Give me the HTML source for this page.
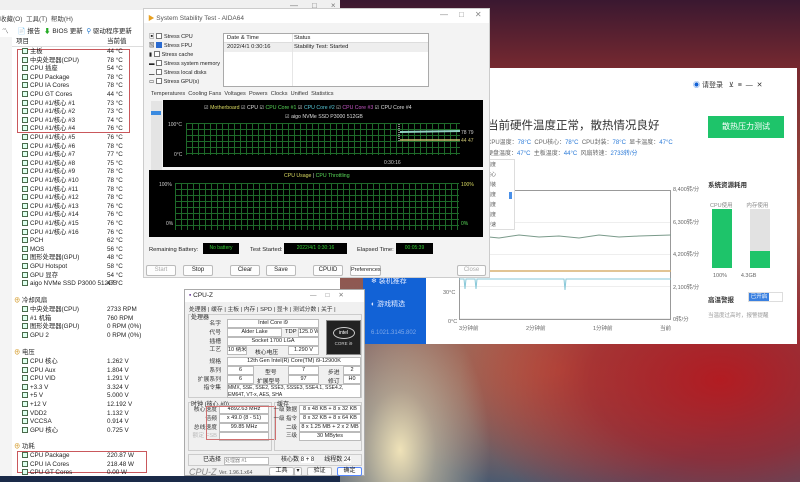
<!DOCTYPE html>
<html><head><meta charset="utf-8"><style>
*{margin:0;padding:0;box-sizing:border-box}
body{width:800px;height:482px;overflow:hidden;position:relative;font-family:"Liberation Sans","Noto Sans CJK SC",sans-serif;font-size:6.5px;color:#222;
background:radial-gradient(ellipse 90px 150px at 400px 450px,#efe2b8 0%,rgba(210,200,170,0.6) 40%,transparent 100%),radial-gradient(ellipse 260px 160px at 720px 380px,#b21c22 0%,rgba(160,30,40,0.7) 50%,transparent 100%),radial-gradient(ellipse 200px 120px at 560px 370px,#c46a4a 0%,transparent 100%),linear-gradient(180deg,#3a1830 0%,#7a2a30 15%,#a05040 45%,#806060 70%,#4a5a70 100%)}
.a{position:absolute;white-space:nowrap}
.win{position:absolute;background:#fff}
.row{position:absolute;left:22px;height:8px;white-space:nowrap;font-size:6.3px;line-height:8px}
.row i{display:inline-block;width:6px;height:6px;border:1.2px solid #4a6a4a;background:#dfe;vertical-align:-1px;margin-right:2px}
.row b{font-weight:normal;position:absolute;left:85px}
.cb{display:inline-block;width:6px;height:6px;border:1px solid #777;background:#fff;vertical-align:-1px;margin-right:2px}
.btn{position:absolute;height:11px;border:1px solid #bbb;background:#fdfdfd;border-radius:2px;font-size:6px;text-align:center;line-height:9px;white-space:nowrap}
.grid{background-color:#000;background-image:linear-gradient(#1e6a2a 1px,transparent 1px),linear-gradient(90deg,#1e6a2a 1px,transparent 1px);background-size:6px 6px}
.lb{position:absolute;font-size:5.8px;color:#333;text-align:right;white-space:nowrap}
.fld{position:absolute;border:1px solid #bbb;background:#fff;font-size:5.5px;text-align:center;line-height:7px;height:9px;white-space:nowrap;overflow:hidden}
</style></head><body>

<!-- AIDA main window -->
<div class="win" style="left:0;top:0;width:340px;height:476px;background:#fff">
<div class="a" style="left:0;top:0;width:340px;height:10px;background:#f0f0f0"></div>
<div class="a" style="left:290px;top:1px;font-size:8px;color:#777;letter-spacing:14px">—□×</div>
<div class="a" style="left:0;top:13px;font-size:6.5px;color:#444">收藏(O) &nbsp;工具(T) &nbsp;帮助(H)</div>
<div class="a" style="left:2px;top:25px;font-size:6.5px;color:#222">〽 &nbsp;&nbsp;&nbsp;&nbsp;📄 报告 &nbsp;<span style="color:#2a2">⬇</span> BIOS 更新 &nbsp;<span style="color:#27c">⚲</span> 驱动程序更新</div>
<div class="a" style="left:0;top:37px;width:145px;height:10px;border-bottom:1px solid #ddd;font-size:6.5px;line-height:10px"><span style="margin-left:16px">项目</span><span style="position:absolute;left:107px">当前值</span></div>
<div class="a" style="left:0;top:37px;width:12px;height:445px;background:#f4f4f4"></div>
<div class="a" style="left:17px;top:49px;width:113px;height:84px;border:1px solid #c9585c"></div>
<div class="a" style="left:17px;top:451px;width:130px;height:22px;border:1px solid #c9585c"></div>
<div id="rows"></div>
<div class="a" style="left:0;top:476px;width:340px;height:6px;background:#1a2a48"></div>
</div>

<!-- Ludashi window -->
<div class="win" style="left:363px;top:68px;width:434px;height:276px">
<div class="a" style="left:0;top:0;width:63px;height:276px;background:#1262d6"></div>
<div class="a" style="left:8px;top:208px;color:#dfe8ff;font-size:7px">❄ 装机推荐</div>
<div class="a" style="left:8px;top:231px;color:#dfe8ff;font-size:7px">◐ 游戏精选</div>
<div class="a" style="left:8px;top:262px;color:#7fa8e8;font-size:6px">6.1021.3145.802</div>
<div class="a" style="left:330px;top:12px;font-size:7px;color:#333"><span style="color:#1262d6">◉</span> 请登录 &nbsp;&nbsp;⊻ &nbsp;≡ &nbsp;— &nbsp;✕</div>
<div class="a" style="left:124px;top:49px;font-size:11.5px;color:#333">当前硬件温度正常，散热情况良好</div>
<div class="a" style="left:124px;top:69px;font-size:6px;color:#666">CPU温度：<span style="color:#2a7ad8">78°C</span> &nbsp;CPU核心：<span style="color:#2a7ad8">78°C</span> &nbsp;CPU封装：<span style="color:#2a7ad8">78°C</span> &nbsp;显卡温度：<span style="color:#2a7ad8">47°C</span></div>
<div class="a" style="left:124px;top:80px;font-size:6px;color:#666">硬盘温度：<span style="color:#2a7ad8">47°C</span> &nbsp;主板温度：<span style="color:#2a7ad8">44°C</span> &nbsp;风扇转速：<span style="color:#2a7ad8">2733转/分</span></div>
<div class="a" style="left:345px;top:48px;width:76px;height:22px;background:#1ec46a;color:#fff;font-size:8px;text-align:center;line-height:22px">散热压力测试</div>
<div class="a" style="left:96px;top:122px;width:212px;height:130px;border:1px solid #999;background:repeating-linear-gradient(180deg,#fff 0,#fff 31px,#eee 31px,#eee 32px)"></div>
<svg class="a" style="left:96px;top:122px" width="212" height="130"><path d="M0 47 L20 46 L40 48 L60 45 L80 47 L100 46 L120 48 L140 45 L160 47 L180 46 L212 45" stroke="#7a9a8a" fill="none" stroke-width="1"/><path d="M0 81 L212 81" stroke="#d8b070" stroke-width="1.5"/><path d="M0 89 L5 89 L6 99 L7 89 L16 89 L17 99 L18 89 L105 89 L106 100 L107 89 L212 89" stroke="#88c8d8" fill="none" stroke-width="1"/></svg>
<div class="a" style="left:120px;top:91px;width:32px;height:71px;border:1px solid #ddd;background:#fff;font-size:5px;color:#555;line-height:10px;padding-left:2px;white-space:normal">温度<br>核心<br>封装<br>温度<br>温度<br>温度<br>转速</div>
<div class="a" style="left:146px;top:124px;width:3px;height:7px;background:#4a90e8"></div>
<div class="a" style="left:80px;top:222px;font-size:5.5px;color:#666">30°C</div>
<div class="a" style="left:85px;top:251px;font-size:5.5px;color:#666">0°C</div>
<div class="a" style="left:310px;top:106px;font-size:5.5px;color:#666;line-height:32.5px">8,400转/分<br>6,300转/分<br>4,200转/分<br>2,100转/分<br>0转/分</div>
<div class="a" style="left:96px;top:256px;width:212px;font-size:5.5px;color:#666;display:flex;justify-content:space-between"><span>3分钟前</span><span>2分钟前</span><span>1分钟前</span><span>当前</span></div>
<div class="a" style="left:345px;top:111px;font-size:6.5px;color:#333;font-weight:bold">系统资源耗用</div>
<div class="a" style="left:347px;top:133px;font-size:5.5px;color:#888">CPU使用 &nbsp;&nbsp;&nbsp;&nbsp;&nbsp;&nbsp;&nbsp;&nbsp;内存使用</div>
<div class="a" style="left:349px;top:141px;width:20px;height:59px;background:#1ec46a"></div>
<div class="a" style="left:387px;top:141px;width:20px;height:59px;background:#e2e2e2"></div>
<div class="a" style="left:387px;top:183px;width:20px;height:17px;background:#1ec46a"></div>
<div class="a" style="left:350px;top:205px;font-size:5.5px;color:#666">100% &nbsp;&nbsp;&nbsp;&nbsp;&nbsp;&nbsp;&nbsp;&nbsp;4.3GB</div>
<div class="a" style="left:345px;top:226px;font-size:6.5px;color:#333;font-weight:bold">高温警报</div>
<div class="a" style="left:385px;top:224px;width:35px;height:10px;border:1px solid #ddd"><div style="width:20px;height:8px;background:#3a80e0;color:#fff;font-size:5.5px;text-align:center;line-height:8px">已开启</div></div>
<div class="a" style="left:345px;top:243px;font-size:5.5px;color:#999">当温度过高时，报警提醒</div>
</div>

<!-- Stability window -->
<div class="win" style="left:143px;top:8px;width:347px;height:270px;border:1px solid #ccc;background:#f3f3f3">
<div class="a" style="left:0;top:0;width:345px;height:14px;background:#fff"></div>
<div class="a" style="left:4px;top:3px;font-size:6.5px;color:#555"><span style="color:#e8a020">▶</span> System Stability Test - AIDA64</div>
<div class="a" style="left:296px;top:1px;font-size:8px;color:#888;letter-spacing:11px">—□✕</div>
<div class="a" style="left:5px;top:24px;font-size:5.5px;line-height:9px">
<div>▣ <span class="cb"></span>Stress CPU</div>
<div>▧ <span class="cb" style="background:#2a6ad0;border-color:#2a6ad0"></span>Stress FPU</div>
<div>▮ <span class="cb"></span>Stress cache</div>
<div>▬ <span class="cb"></span>Stress system memory</div>
<div>▁ <span class="cb"></span>Stress local disks</div>
<div>▭ <span class="cb"></span>Stress GPU(s)</div></div>
<div class="a" style="left:79px;top:24px;width:206px;height:54px;border:1px solid #aaa;background:#fff;font-size:5.8px">
<div style="height:9px;border-bottom:1px solid #ddd;line-height:9px;padding-left:3px">Date &amp; Time<span style="position:absolute;left:70px">Status</span></div>
<div style="height:9px;background:#eee;line-height:9px;padding-left:3px">2022/4/1 0:30:16<span style="position:absolute;left:70px">Stability Test: Started</span></div>
<div class="a" style="left:68px;top:0;width:1px;height:52px;background:#e6e6e6"></div></div>
<div class="a" style="left:7px;top:82px;font-size:5.6px;color:#333">Temperatures &nbsp;Cooling Fans &nbsp;Voltages &nbsp;Powers &nbsp;Clocks &nbsp;Unified &nbsp;Statistics</div>
<div class="a" style="left:7px;top:92px;width:11px;height:72px;background:#e4e4e4"><div style="width:10px;height:4px;margin-top:10px;background:#3a8ae0"></div></div>
<div class="a" style="left:19px;top:91px;width:320px;height:67px;background:#000"></div>
<div class="a grid" style="left:42px;top:114px;width:274px;height:32px"></div>
<div class="a" style="left:60px;top:96px;font-size:5.2px;color:#ddd">☑ <span style="color:#d8d860">Motherboard</span> ☑ CPU ☑ <span style="color:#58d858">CPU Core #1</span> ☑ <span style="color:#58c8d8">CPU Core #2</span> ☑ <span style="color:#c858c8">CPU Core #3</span> ☑ CPU Core #4</div>
<div class="a" style="left:141px;top:105px;font-size:5.2px;color:#ddd">☑ aigo NVMe SSD P3000 512GB</div>
<svg class="a" style="left:252px;top:114px" width="70" height="32"><path d="M3 18 L3 0" stroke="#fff" stroke-dasharray="1 1"/><path d="M4 9 L64 8" stroke="#8fd0c0" stroke-width="2"/><path d="M4 17 L64 17" stroke="#c8c070" stroke-width="1.5"/></svg>
<div class="a" style="left:24px;top:113px;font-size:5px;color:#ccc">100°C</div>
<div class="a" style="left:30px;top:143px;font-size:5px;color:#ccc">0°C</div>
<div class="a" style="left:240px;top:151px;font-size:5px;color:#ccc">0:30:16</div>
<div class="a" style="left:317px;top:120px;font-size:5px;color:#ccc;line-height:8px">78 79<br><span style="color:#c8c070">44 47</span></div>
<div class="a" style="left:5px;top:161px;width:334px;height:67px;background:#000"></div>
<div class="a grid" style="left:31px;top:174px;width:284px;height:47px"></div>
<div class="a" style="left:140px;top:164px;font-size:5.2px;color:#d8d860">CPU Usage <span style="color:#ccc">|</span> <span style="color:#58d858">CPU Throttling</span></div>
<div class="a" style="left:15px;top:173px;font-size:5px;color:#ccc">100%</div>
<div class="a" style="left:22px;top:212px;font-size:5px;color:#ccc">0%</div>
<div class="a" style="left:317px;top:173px;font-size:5px;color:#d8d860">100%</div>
<div class="a" style="left:317px;top:212px;font-size:5px;color:#58d858">0%</div>
<div class="a" style="left:5px;top:238px;font-size:5.8px">Remaining Battery:</div>
<div class="a" style="left:59px;top:234px;width:36px;height:11px;background:#000;color:#3c3;font-size:5px;text-align:center;line-height:11px">No battery</div>
<div class="a" style="left:106px;top:238px;font-size:5.8px">Test Started:</div>
<div class="a" style="left:140px;top:234px;width:63px;height:11px;background:#000;color:#3c3;font-size:5px;text-align:center;line-height:11px">2022/4/1 0:30:16</div>
<div class="a" style="left:213px;top:238px;font-size:5.8px">Elapsed Time:</div>
<div class="a" style="left:252px;top:234px;width:37px;height:11px;background:#000;color:#3c3;font-size:5px;text-align:center;line-height:11px">00:05:39</div>
<div class="btn" style="left:2px;top:256px;width:30px;color:#aaa">Start</div>
<div class="btn" style="left:39px;top:256px;width:30px">Stop</div>
<div class="btn" style="left:86px;top:256px;width:30px">Clear</div>
<div class="btn" style="left:122px;top:256px;width:30px">Save</div>
<div class="btn" style="left:169px;top:256px;width:30px">CPUID</div>
<div class="btn" style="left:206px;top:256px;width:31px;font-size:5.5px">Preferences</div>
<div class="btn" style="left:313px;top:256px;width:29px;color:#aaa">Close</div>
</div>

<!-- CPU-Z -->
<div class="win" style="left:184px;top:289px;width:181px;height:187px;border:1px solid #aaa;background:#f0f0f0">
<div class="a" style="left:0;top:0;width:179px;height:12px;background:#fff;font-size:6.5px;line-height:12px;padding-left:4px"><span style="color:#6a3a9a">▪</span> CPU-Z<span style="position:absolute;left:125px;color:#777;letter-spacing:9px">—□✕</span></div>
<div class="a" style="left:4px;top:14px;font-size:5.8px;color:#333">处理器 | 缓存 | 主板 | 内存 | SPD | 显卡 | 测试分数 | 关于 |</div>
<div class="a" style="left:3px;top:24px;width:174px;height:84px;border:1px solid #ccc"></div>
<div class="a" style="left:6px;top:22px;font-size:6px;background:#f0f0f0">处理器</div>
<div class="lb" style="left:14px;top:30px;width:22px;line-height:8.8px">名字<br>代号<br>插槽<br>工艺</div>
<div class="fld" style="left:42px;top:29px;width:92px">Intel Core i9</div>
<div class="fld" style="left:42px;top:38px;width:55px">Alder Lake</div><div class="a" style="left:100px;top:39px;font-size:5.8px">TDP</div><div class="fld" style="left:113px;top:38px;width:21px">125.0 W</div>
<div class="fld" style="left:42px;top:47px;width:92px">Socket 1700 LGA</div>
<div class="fld" style="left:42px;top:56px;width:20px">10 纳米</div><div class="a" style="left:70px;top:57px;font-size:5.8px">核心电压</div><div class="fld" style="left:103px;top:56px;width:31px">1.290 V</div>
<div class="a" style="left:141px;top:30px;width:35px;height:35px;background:#222;border:1px solid #888"><div style="margin:6px auto 0;width:22px;height:12px;border-radius:50%;border:1px solid #ccc;color:#fff;font-size:5px;text-align:center;line-height:10px">intel</div><div style="color:#ccc;font-size:4.5px;text-align:center;margin-top:2px">CORE i9</div></div>
<div class="lb" style="left:6px;top:68px;width:30px;line-height:8.8px">规格<br>系列<br>扩展系列<br>指令集</div>
<div class="fld" style="left:42px;top:67px;width:134px">12th Gen Intel(R) Core(TM) i9-12900K</div>
<div class="fld" style="left:42px;top:76px;width:27px">6</div><div class="a" style="left:80px;top:77px;font-size:5.8px">型号</div><div class="fld" style="left:103px;top:76px;width:31px">7</div><div class="a" style="left:143px;top:77px;font-size:5.8px">步进</div><div class="fld" style="left:158px;top:76px;width:18px">2</div>
<div class="fld" style="left:42px;top:85px;width:27px">6</div><div class="a" style="left:72px;top:86px;font-size:5.8px">扩展型号</div><div class="fld" style="left:103px;top:85px;width:31px">97</div><div class="a" style="left:143px;top:86px;font-size:5.8px">修订</div><div class="fld" style="left:158px;top:85px;width:18px">H0</div>
<div class="fld" style="left:42px;top:94px;width:134px;height:14px;font-size:5px;line-height:6.5px;text-align:left;white-space:normal">MMX, SSE, SSE2, SSE3, SSSE3, SSE4.1, SSE4.2, EM64T, VT-x, AES, SHA</div>
<div class="a" style="left:3px;top:112px;width:84px;height:49px;border:1px solid #ccc"></div>
<div class="a" style="left:6px;top:109px;font-size:6px;background:#f0f0f0">时钟 (核心 #0)</div>
<div class="lb" style="left:6px;top:116px;width:26px;line-height:8.8px">核心速度<br>倍频<br>总线速度<br><span style="color:#bbb">额定 FSB</span></div>
<div class="fld" style="left:34px;top:115px;width:50px">4892.63 MHz</div>
<div class="fld" style="left:34px;top:124px;width:50px">x 49.0 (8 - 51)</div>
<div class="fld" style="left:34px;top:133px;width:50px">99.85 MHz</div>
<div class="fld" style="left:34px;top:142px;width:50px"></div>
<div class="a" style="left:21px;top:116px;width:70px;height:34px;border:1px solid #d07070"></div>
<div class="a" style="left:89px;top:112px;width:88px;height:49px;border:1px solid #ccc"></div>
<div class="a" style="left:92px;top:109px;font-size:6px;background:#f0f0f0">缓存</div>
<div class="lb" style="left:88px;top:116px;width:24px;line-height:8.8px;font-size:5.5px">一级 数据<br>一级 指令<br>二级<br>三级</div>
<div class="fld" style="left:114px;top:115px;width:62px">8 x 48 KB + 8 x 32 KB</div>
<div class="fld" style="left:114px;top:124px;width:62px">8 x 32 KB + 8 x 64 KB</div>
<div class="fld" style="left:114px;top:133px;width:62px">8 x 1.25 MB + 2 x 2 MB</div>
<div class="fld" style="left:114px;top:142px;width:62px">30 MBytes</div>
<div class="a" style="left:3px;top:164px;width:174px;height:12px;border:1px solid #ccc;font-size:6px;line-height:10px"><span style="margin-left:14px">已选择</span><span style="display:inline-block;width:45px;height:8px;border:1px solid #bbb;background:#fff;margin-left:3px;vertical-align:-1px;font-size:5px;color:#888;line-height:6px">处理器 #1</span><span style="margin-left:12px">核心数</span> <span style="background:#fff">8 + 8</span><span style="margin-left:10px">线程数</span> <span style="background:#fff">24</span></div>
<div class="a" style="left:4px;top:177px;font-size:9px;color:#888;font-style:italic">CPU-Z</div>
<div class="a" style="left:34px;top:180px;font-size:5px;color:#555">Ver. 1.96.1.x64</div>
<div class="btn" style="left:84px;top:177px;width:25px;height:9px;line-height:7px">工具</div>
<div class="btn" style="left:109px;top:177px;width:8px;height:9px;line-height:7px">▾</div>
<div class="btn" style="left:122px;top:177px;width:25px;height:9px;line-height:7px">验证</div>
<div class="btn" style="left:152px;top:177px;width:25px;height:9px;line-height:7px;border-color:#58f">确定</div>
</div>

<script>
const r=[
[52,"主板","44 °C"],[60.6,"中央处理器(CPU)","78 °C"],[69.2,"CPU 插座","54 °C"],[77.8,"CPU Package","78 °C"],[86.4,"CPU IA Cores","78 °C"],[95,"CPU GT Cores","44 °C"]];
const t=[73,73,74,76,76,78,77,75,78,78,78,78,76,76,76,76];
t.forEach((v,i)=>r.push([103.6+i*8.6,"CPU #1/核心 #"+(i+1),v+" °C"]));
[["PCH","62 °C"],["MOS","56 °C"],["图形处理器(GPU)","48 °C"],["GPU Hotspot","58 °C"],["GPU 显存","54 °C"],["aigo NVMe SSD P3000 512GB","47 °C"]].forEach((a,i)=>r.push([241.2+i*8.6,a[0],a[1]]));
const s=[[301,"冷却风扇"],[353,"电压"],[447,"功耗"]];
[["中央处理器(CPU)","2733 RPM"],["#1 机箱","760 RPM"],["图形处理器(GPU)","0 RPM (0%)"],["GPU 2","0 RPM (0%)"]].forEach((a,i)=>r.push([310+i*8.6,a[0],a[1]]));
[["CPU 核心","1.262 V"],["CPU Aux","1.804 V"],["CPU VID","1.291 V"],["+3.3 V","3.324 V"],["+5 V","5.000 V"],["+12 V","12.192 V"],["VDD2","1.132 V"],["VCCSA","0.914 V"],["GPU 核心","0.725 V"]].forEach((a,i)=>r.push([362+i*8.6,a[0],a[1]]));
[["CPU Package","220.87 W"],["CPU IA Cores","218.48 W"],["CPU GT Cores","0.00 W"]].forEach((a,i)=>r.push([456+i*8.6,a[0],a[1]]));
let h="";
r.forEach(a=>{h+=`<div class="row" style="top:${a[0]-4}px"><i></i>${a[1]}<b>${a[2]}</b></div>`});
s.forEach(a=>{h+=`<div class="row" style="top:${a[0]-4}px;left:14px"><span style="color:#c80">⊕</span> ${a[1]}</div>`});
document.getElementById("rows").innerHTML=h;
</script>
</body></html>
